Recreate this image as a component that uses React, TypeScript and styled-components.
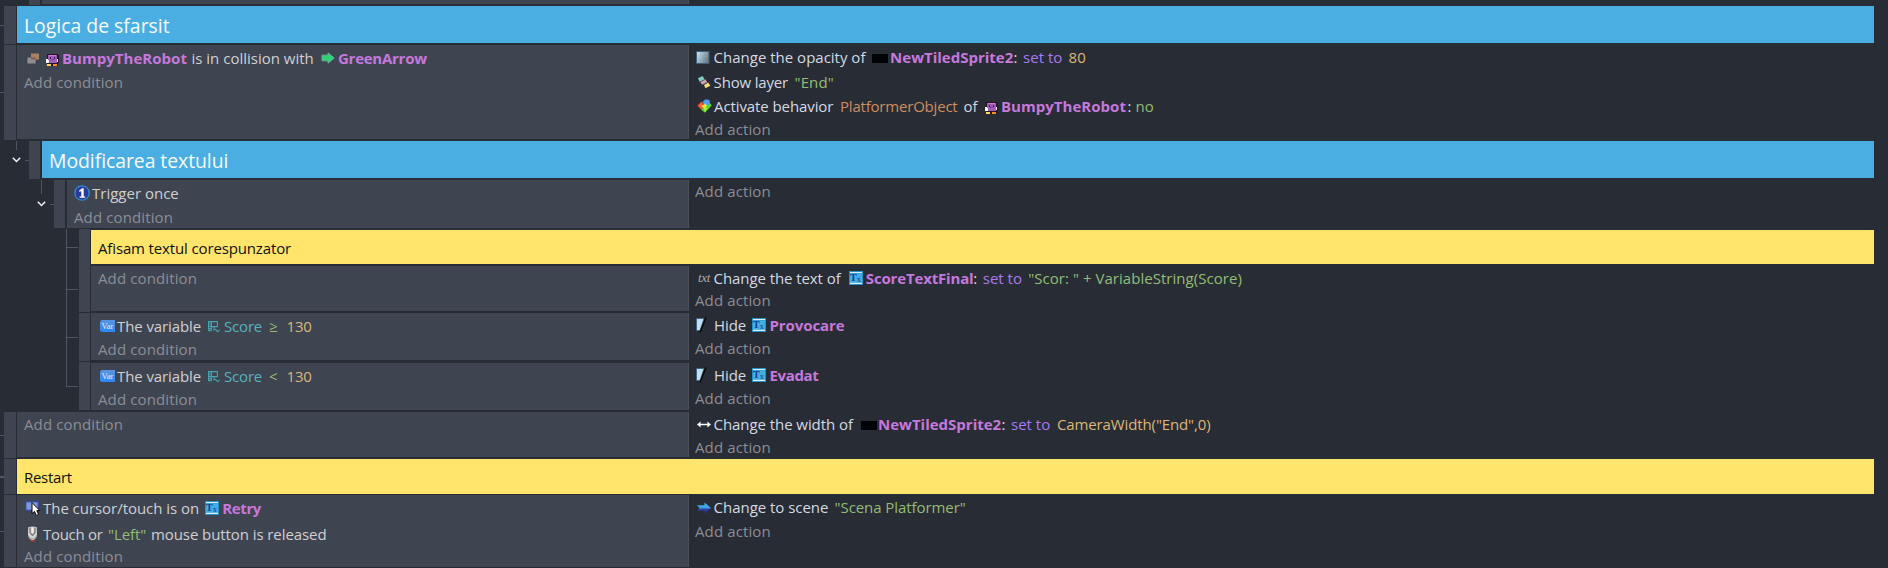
import React, { ReactNode } from "react";
import styled, { createGlobalStyle } from "styled-components";

const Global = createGlobalStyle`
  body { margin: 0; background: #282c34; overflow: hidden; }
`;

const line = "#50555f";

const Sheet = styled.main`
  width: 1888px;
  height: 568px;
  overflow: hidden;
  background: #282c34;
  font-family: "Open Sans", "Noto Sans", sans-serif;
  font-size: 15px;
  color: #d4d9e4;
`;

const Row = styled.div<{ $h: number }>`
  display: flex;
  align-items: flex-start;
  height: ${(p) => p.$h}px;
  padding-right: 14px;
`;

/* Indentation area holding the tree connectors */
const Gutter = styled.div<{ $w: number; $trunk?: number }>`
  flex: none;
  display: flex;
  flex-direction: column;
  box-sizing: border-box;
  width: ${(p) => p.$w}px;
  height: 100%;
  padding-left: ${(p) => p.$trunk ?? 0}px;
`;

const Elbow = styled.div<{ $y: number; $side?: boolean; $w: number; $thick?: number }>`
  box-sizing: border-box;
  width: ${(p) => p.$w}px;
  height: ${(p) => p.$y}px;
  border-left: ${(p) => (p.$side ? `1px solid ${line}` : "none")};
  border-bottom: ${(p) => p.$thick ?? 1}px solid ${line};
`;

const Trunk = styled.div<{ $h?: number }>`
  width: 1px;
  ${(p) => (p.$h ? `height: ${p.$h}px;` : "flex: 1;")}
  background: ${line};
`;

const Toggle = styled.div<{ $mt: number }>`
  display: flex;
  align-items: center;
  height: 8px;
  margin: ${(p) => p.$mt}px 0 0 -4px;
`;

const Stub = styled.span`
  width: 4px;
  height: 1px;
  margin-left: 4px;
  background: ${line};
`;

const Strip = styled.div<{ $w: number; $h: number }>`
  flex: none;
  width: ${(p) => p.$w}px;
  height: ${(p) => p.$h}px;
  background: #3f4451;
`;

const Comment = styled.div<{ $tone: "blue" | "yellow"; $h: number; $gap: number; $mt?: number; $ls?: number }>`
  flex: 1;
  box-sizing: border-box;
  height: ${(p) => p.$h}px;
  margin: ${(p) => p.$mt ?? 0}px 0 0 ${(p) => p.$gap}px;
  padding-left: 7px;
  white-space: pre;
  background: ${(p) => (p.$tone === "blue" ? "#4aaee3" : "#ffe56c")};
  color: ${(p) => (p.$tone === "blue" ? "#f7fbfe" : "#111")};
  font-size: ${(p) => (p.$tone === "blue" ? 19.4 : 15)}px;
  letter-spacing: ${(p) => p.$ls ?? 0}px;
  line-height: ${(p) => p.$h + (p.$tone === "blue" ? 3 : 2)}px;
`;

const Conditions = styled.div<{ $left: number; $gap: number; $h: number; $mt?: number; $pt?: number }>`
  flex: none;
  box-sizing: border-box;
  width: ${(p) => 689 - p.$left}px;
  height: ${(p) => p.$h}px;
  margin: ${(p) => p.$mt ?? 0}px 0 0 ${(p) => p.$gap}px;
  padding: ${(p) => p.$pt ?? 0}px 0 0 7px;
  border-right: 1px solid #4b4f58;
  background: #3f4451;
  color: #cfd0d1;
`;

const Actions = styled.div<{ $mt?: number; $pt?: number }>`
  flex: 1;
  margin-top: ${(p) => p.$mt ?? 0}px;
  padding: ${(p) => p.$pt ?? 0}px 0 0 6px;
`;

const Line = styled.div<{ $h?: number }>`
  display: flex;
  height: ${(p) => p.$h ?? 24.5}px;
  line-height: ${(p) => p.$h ?? 24.5}px;
`;

const Add = styled.div<{ $h: number }>`
  height: ${(p) => p.$h}px;
  line-height: ${(p) => p.$h}px;
  letter-spacing: 0.12px;
  color: #8b8e95;
`;

const tones = {
  plain: "inherit",
  object: "#c678dd",
  operator: "#a97bf2",
  number: "#dcb777",
  string: "#93bd76",
  behavior: "#d08c60",
  variable: "#54b3bf",
};

/* $w is the slot width up to the next part of the sentence */
const Text = styled.span<{ $w?: number; $ls?: number; $tone?: keyof typeof tones }>`
  flex: none;
  width: ${(p) => (p.$w ? `${p.$w}px` : "auto")};
  white-space: pre;
  letter-spacing: ${(p) => p.$ls ?? 0}px;
  color: ${(p) => tones[p.$tone ?? "plain"]};
  font-weight: ${(p) => (p.$tone === "object" ? 700 : 400)};
`;

const IconSlot = styled.span<{ $w: number; $pl?: number; $dy?: number }>`
  flex: none;
  display: flex;
  align-items: center;
  box-sizing: border-box;
  width: ${(p) => p.$w}px;
  padding-left: ${(p) => p.$pl ?? 0}px;
  padding-top: ${(p) => p.$dy ?? 0}px;
  svg { flex: none; display: block; overflow: visible; }
`;

const Chevron = () => (
  <svg width="9" height="8" viewBox="0 0 9 8">
    <path d="M0.8 1.8 4.5 5.5 8.2 1.8" fill="none" stroke="#f2f2f2" strokeWidth="1.5" />
  </svg>
);

const Collision = () => (
  <svg width="12" height="11" viewBox="0 0 12 11">
    <rect x="4" y="0.5" width="8" height="6" fill="#a98163" />
    <rect x="0.4" y="4.5" width="8.2" height="6" fill="#8e8e8c" />
    <rect x="4" y="4.5" width="4.6" height="2" fill="#8a5450" />
  </svg>
);

const Robot = () => (
  <svg width="13" height="12" viewBox="0 0 13 12" shapeRendering="crispEdges">
    <path d="M1 0h11v1h1v8h-1v3H1V9H0V5h1z" fill="#231525" />
    <rect x="2" y="1" width="9" height="8" fill="#a25bbd" />
    <rect x="3" y="1" width="7" height="1" fill="#cf7bd4" />
    <rect x="4" y="3" width="1" height="2" fill="#3c1a4a" />
    <rect x="8" y="3" width="1" height="2" fill="#3c1a4a" />
    <rect x="5" y="5" width="3" height="1" fill="#7b3f97" />
    <path d="M0 5h2v1h1v3H0z" fill="#fff" />
    <rect x="11" y="5" width="1" height="3" fill="#efe7f2" />
    <rect x="1" y="10" width="4" height="2" fill="#ffd25a" />
    <rect x="7" y="10" width="4" height="2" fill="#f39220" />
  </svg>
);

const GreenArrowIcon = () => (
  <svg width="14" height="12" viewBox="0 0 14 12">
    <path d="M1 3.2h6V.8L13.2 6 7 11.2V8.8H1z" fill="#2fd276" stroke="#74a98d" strokeWidth="1" />
  </svg>
);

const Opacity = () => (
  <svg width="14" height="13" viewBox="0 0 14 13">
    <defs>
      <linearGradient id="op" x1="0" y1="0" x2="1" y2="0.5">
        <stop offset="0" stopColor="#c9e6f5" />
        <stop offset="1" stopColor="#6f7f8c" />
      </linearGradient>
    </defs>
    <rect x="0.5" y="0.5" width="12.5" height="12" fill="url(#op)" stroke="#3f5d75" />
  </svg>
);

const Layer = () => (
  <svg width="14" height="14" viewBox="0 0 15 14">
    <path d="M1 3 6 0.5 8.2 4.5 3 7z" fill="#7fcfc5" />
    <path d="M3.5 7 9 4 11 7.5 5.5 10z" fill="#d9a3b5" />
    <path d="M7.5 10.2 12 7.5 14.3 11 9 13.8z" fill="#f2dc7c" />
    <path d="M3 7 8.2 4.5M5.5 10 11.5 7.3" stroke="#5c4a55" strokeWidth=".8" />
  </svg>
);

const Behavior = () => (
  <svg width="15" height="14" viewBox="0 0 15 14">
    <path d="M0.5 6.5 4.5 2.5 8.5 7 4 10.5z" fill="#f4532b" />
    <path d="M5.5 3 8.5 0.3 12.5 1 13 5 8.5 7.5z" fill="#4f9df2" />
    <path d="M8.5 7 13.5 4.5 14.6 6.5 8 13.7 4 10.5z" fill="#55d836" />
    <path d="M2.8 5.2 5 7l3-2.5 2 2.3-2.5 2.4L5 8z" fill="#ffe14a" />
    <path d="M6.5 9 8.5 7.5 10 9.2 8 13z" fill="#b7ef35" />
  </svg>
);

const Tiled = () => (
  <svg width="16" height="9" viewBox="0 0 16 9">
    <rect width="16" height="9" fill="#000406" />
  </svg>
);

const Once = () => (
  <svg width="16" height="16" viewBox="0 0 16 16">
    <circle cx="8" cy="8" r="7.2" fill="#2b399d" stroke="#2e8fc9" strokeWidth="1.3" />
    <path d="M5.2 5.6 8.1 3.2h1.6v8.2h1.5v1.4H5.6v-1.4h1.7V6L5.6 7z" fill="#fff" />
  </svg>
);

const VarIcon = () => (
  <svg width="15" height="12" viewBox="0 0 15 12">
    <defs>
      <linearGradient id="vr" x1="0" y1="0" x2="0" y2="1">
        <stop offset="0" stopColor="#5a94df" />
        <stop offset="1" stopColor="#2c87f5" />
      </linearGradient>
    </defs>
    <path d="M1.5 0H15v12H1.5L0 10.5v-9z" fill="url(#vr)" />
    <text x="1.4" y="8.8" fontFamily="Liberation Serif, serif" fontSize="8.6" fill="#e6f0fc">Var</text>
  </svg>
);

const SceneVar = () => (
  <svg width="12" height="11" viewBox="0 0 12 11" fill="none" stroke="#4aa3b0">
    <path d="M.6 0v10M3.4 .5v9M.5 .6H9.6M9.4 .5v5.4M3.5 5.6H9.5M.5 3h3M.5 5.4h3M.5 7.6h3M.5 9.6h3" strokeWidth="1.1" />
    <path d="M5.4 9.4c1-1.6 2-1.6 3 0s2.2 1.3 3.2-.6M6.2 5.8v2" strokeWidth="1.1" />
  </svg>
);

const TextObj = () => (
  <svg width="14" height="14" viewBox="0 0 14 14">
    <rect width="14" height="14" fill="#2790c4" />
    <rect x="1" y="2.4" width="12" height="9.2" fill="#40b0e4" />
    <path d="M1 1.5h12M1 12.4h12" stroke="#d9f0fb" strokeWidth="1.1" />
    <text x="1.1" y="10.4" fontFamily="Liberation Serif, serif" fontWeight="700" fontSize="10" fill="#1c3c93">T</text>
    <text x="8" y="11" fontFamily="Liberation Serif, serif" fontWeight="700" fontSize="7.5" fill="#31509f">x</text>
  </svg>
);

const Txt = styled.span`
  margin-top: -1px;
  font-family: "Liberation Serif", serif;
  font-style: italic;
  font-size: 13px;
  letter-spacing: -0.3px;
  line-height: 20px;
  color: #a9a9a9;
`;

const HideIcon = () => (
  <svg width="11" height="16" viewBox="0 0 11 16">
    <path d="M0.5 1.5H8L4 13.5H0.5z" fill="#bfe0f0" stroke="#31597b" strokeWidth=".7" />
    <path d="M10 .5 4 15.5" stroke="#07090b" strokeWidth="1.5" />
  </svg>
);

const WidthIcon = () => (
  <svg width="14" height="7" viewBox="0 0 14 7">
    <path d="M0 3.5 3.6 .6v2.2h6.8V.6L14 3.5l-3.6 2.9V4.2H3.6v2.2z" fill="#fff" />
  </svg>
);

const CursorIcon = () => (
  <svg width="16" height="16" viewBox="0 0 16 16">
    <rect x="0.7" y="1.7" width="12.6" height="8.6" fill="#7f97dc" stroke="#2f49a0" strokeWidth="1.3" />
    <path d="M7 2.6v11l2.5-2.2 1.8 4 2.3-1-1.8-3.8h3.1z" fill="#fff" stroke="#050505" strokeWidth="1" />
  </svg>
);

const MouseIcon = () => (
  <svg width="11" height="16" viewBox="0 0 11 16">
    <path d="M1.2 1.2C3.5 .2 7.5 .2 9.8 1.2L10 7c0 4-1.5 7-4.5 7S1 11 1 7z" fill="#d6d6d4" />
    <path d="M3 1.5v5l2.5 3 2.5-3v-5" fill="none" stroke="#65625f" strokeWidth="1.1" />
    <path d="M5.5 2v4.6" stroke="#f3f3f3" strokeWidth="1.4" />
    <path d="M1.6 9.5C2.5 13.6 8.5 13.6 9.4 9.5" fill="none" stroke="#a3a19f" />
    <path d="M3.4 14.4c1.4.8 2.8.8 4.2 0" stroke="#c03a30" strokeWidth="1.5" fill="none" />
  </svg>
);

const SceneArrow = () => (
  <svg width="14" height="12" viewBox="0 0 14 12">
    <defs>
      <linearGradient id="sa" x1="0" y1="0" x2="0" y2="1">
        <stop offset="0.15" stopColor="#45b5ea" />
        <stop offset="0.5" stopColor="#3f9ce0" />
        <stop offset="0.6" stopColor="#2d3fa5" />
        <stop offset="1" stopColor="#26307e" />
      </linearGradient>
    </defs>
    <path d="M0 3.3h7.5V.4L14 6l-6.5 5.6V8.8H0L2.4 6z" fill="url(#sa)" />
  </svg>
);

type EventProps = {
  h: number;
  level: 0 | 3;
  stub: number;
  last?: boolean;
  cell: number;
  strip: number;
  mt?: number;
  pt?: number;
  apt?: number;
  conditions: ReactNode;
  actions: ReactNode;
};

const RootGutter = ({ y, thick }: { y: number; thick?: number }) => (
  <Gutter $w={4}><Elbow $y={y} $w={4} $thick={thick} /></Gutter>
);

const NestedGutter = ({ y, last }: { y: number; last?: boolean }) => (
  <Gutter $w={79} $trunk={66}>
    <Elbow $y={y} $w={12} $side />
    {!last && <Trunk />}
  </Gutter>
);

const EventRow = (p: EventProps) => (
  <Row $h={p.h}>
    {p.level === 0 ? <RootGutter y={p.stub} /> : <NestedGutter y={p.stub} last={p.last} />}
    <Strip $w={p.level === 0 ? 12 : 11} $h={p.strip} />
    <Conditions $left={p.level === 0 ? 17 : 91} $gap={1} $h={p.cell} $mt={p.mt} $pt={p.pt}>
      {p.conditions}
    </Conditions>
    <Actions $mt={p.mt} $pt={p.apt}>{p.actions}</Actions>
  </Row>
);

const ScoreCondition = ({ op }: { op: string }) => (
  <Line>
    <IconSlot $w={19} $pl={2}><VarIcon /></IconSlot>
    <Text $w={91} $ls={-0.1}>The variable</Text>
    <IconSlot $w={16} $dy={1}><SceneVar /></IconSlot>
    <Text $w={45} $ls={-0.18} $tone="variable">Score</Text>
    <Text $w={17.5} $tone="string">{op}</Text>
    <Text $ls={-0.2} $tone="number">130</Text>
  </Line>
);

const HideAction = ({ name, ls }: { name: string; ls: number }) => (
  <Line>
    <IconSlot $w={19} $pl={1}><HideIcon /></IconSlot>
    <Text $w={38} $ls={-0.1}>Hide</Text>
    <IconSlot $w={17.5}><TextObj /></IconSlot>
    <Text $ls={ls} $tone="object">{name}</Text>
  </Line>
);

export default function App() {
  return (
    <Sheet>
      <Global />
      <Row $h={6}>
        <Gutter $w={29} />
        <Strip $w={11} $h={5} />
        <Conditions $left={42} $gap={2} $h={4} />
      </Row>

      <Row $h={39}>
        <RootGutter y={20} />
        <Strip $w={12} $h={38} />
        <Comment $tone="blue" $h={37} $gap={1}>Logica de sfarsit</Comment>
      </Row>

      <EventRow
        h={96} level={0} stub={48} cell={94} strip={95} pt={1}
        conditions={<>
          <Line>
            <IconSlot $w={21.5} $pl={3}><Collision /></IconSlot>
            <IconSlot $w={16.5} $dy={3}><Robot /></IconSlot>
            <Text $w={129.5} $ls={0.03} $tone="object">BumpyTheRobot</Text>
            <Text $w={129}>is in collision with</Text>
            <IconSlot $w={17.5}><GreenArrowIcon /></IconSlot>
            <Text $ls={-0.26} $tone="object">GreenArrow</Text>
          </Line>
          <Add $h={23.5}>Add condition</Add>
        </>}
        actions={<>
          <Line>
            <IconSlot $w={18.6} $pl={1}><Opacity /></IconSlot>
            <Text $w={158.5}>Change the opacity of</Text>
            <IconSlot $w={18} $dy={2}><Tiled /></IconSlot>
            <Text $w={123.5} $tone="object">NewTiledSprite2</Text>
            <Text $w={9.5}>:</Text>
            <Text $w={45.5} $tone="operator">set to</Text>
            <Text $tone="number">80</Text>
          </Line>
          <Line>
            <IconSlot $w={18.6} $pl={2}><Layer /></IconSlot>
            <Text $w={81} $ls={-0.18}>Show layer</Text>
            <Text $ls={0.1} $tone="string">"End"</Text>
          </Line>
          <Line>
            <IconSlot $w={19} $pl={2}><Behavior /></IconSlot>
            <Text $w={126} $ls={-0.09}>Activate behavior</Text>
            <Text $w={123.5} $ls={-0.2} $tone="behavior">PlatformerObject</Text>
            <Text $w={21}>of</Text>
            <IconSlot $w={16.5} $dy={3}><Robot /></IconSlot>
            <Text $w={126.5} $ls={0.03} $tone="object">BumpyTheRobot</Text>
            <Text $w={8}>:</Text>
            <Text $tone="string">no</Text>
          </Line>
          <Add $h={20.5}>Add action</Add>
        </>}
      />

      <Row $h={39}>
        <Gutter $w={29} $trunk={16}>
          <Trunk $h={9} />
          <Toggle $mt={6}><Chevron /><Stub /></Toggle>
        </Gutter>
        <Strip $w={11} $h={38} />
        <Comment $tone="blue" $h={37} $gap={2} $ls={-0.05}>Modificarea textului</Comment>
      </Row>

      <Row $h={49}>
        <Gutter $w={54} $trunk={41}>
          <Trunk $h={14} />
          <Toggle $mt={6}><Chevron /><Stub /></Toggle>
        </Gutter>
        <Strip $w={11} $h={48} />
        <Conditions $left={67} $gap={2} $h={48} $pt={1}>
          <Line>
            <IconSlot $w={18}><Once /></IconSlot>
            <Text>Trigger once</Text>
          </Line>
          <Add $h={23}>Add condition</Add>
        </Conditions>
        <Actions><Add $h={22}>Add action</Add></Actions>
      </Row>

      <Row $h={36}>
        <NestedGutter y={19} />
        <Strip $w={11} $h={36} />
        <Comment $tone="yellow" $h={34} $gap={1} $mt={1} $ls={-0.14}>Afisam textul corespunzator</Comment>
      </Row>

      <EventRow
        h={48} level={3} stub={25} cell={45} strip={47} mt={1}
        conditions={<Add $h={24}>Add condition</Add>}
        actions={<>
          <Line $h={24}>
            <IconSlot $w={18.6} $pl={3}><Txt>txt</Txt></IconSlot>
            <Text $w={135} $ls={-0.08}>Change the text of</Text>
            <IconSlot $w={17.2}><TextObj /></IconSlot>
            <Text $w={107.5} $ls={-0.16} $tone="object">ScoreTextFinal</Text>
            <Text $w={9.5}>:</Text>
            <Text $w={45.5} $tone="operator">set to</Text>
            <Text $ls={0.04} $tone="string">"Scor: " + VariableString(Score)</Text>
          </Line>
          <Add $h={21.5}>Add action</Add>
        </>}
      />

      <EventRow
        h={49} level={3} stub={25} cell={47} strip={48} pt={1}
        conditions={<><ScoreCondition op="≥" /><Add $h={21.5}>Add condition</Add></>}
        actions={<><HideAction name="Provocare" ls={-0.09} /><Add $h={21}>Add action</Add></>}
      />

      <EventRow
        h={50} level={3} stub={25} last cell={47} strip={48} mt={1} pt={1}
        conditions={<><ScoreCondition op="<" /><Add $h={21.5}>Add condition</Add></>}
        actions={<><HideAction name="Evadat" ls={-0.37} /><Add $h={21.5}>Add action</Add></>}
      />

      <EventRow
        h={47} level={0} stub={24} cell={45} strip={46}
        conditions={<Add $h={24.5}>Add condition</Add>}
        actions={<>
          <Line>
            <IconSlot $w={18.6} $pl={2}><WidthIcon /></IconSlot>
            <Text $w={147.4} $ls={-0.07}>Change the width of</Text>
            <IconSlot $w={17} $dy={2}><Tiled /></IconSlot>
            <Text $w={123.5} $tone="object">NewTiledSprite2</Text>
            <Text $w={9.5}>:</Text>
            <Text $w={46} $tone="operator">set to</Text>
            <Text $ls={-0.12} $tone="number">CameraWidth("End",0)</Text>
          </Line>
          <Add $h={21.5}>Add action</Add>
        </>}
      />

      <Row $h={36}>
        <RootGutter y={19} thick={2} />
        <Strip $w={12} $h={35} />
        <Comment $tone="yellow" $h={35} $gap={1} $ls={-0.3}>Restart</Comment>
      </Row>

      <EventRow
        h={73} level={0} stub={37} cell={72} strip={72} pt={1} apt={0.3}
        conditions={<>
          <Line>
            <IconSlot $w={19} $pl={1}><CursorIcon /></IconSlot>
            <Text $w={162} $ls={-0.04}>The cursor/touch is on</Text>
            <IconSlot $w={17.2}><TextObj /></IconSlot>
            <Text $ls={-0.36} $tone="object">Retry</Text>
          </Line>
          <Line $h={26}>
            <IconSlot $w={19} $pl={3}><MouseIcon /></IconSlot>
            <Text $w={65} $ls={-0.3}>Touch or</Text>
            <Text $w={43} $ls={-0.05} $tone="string">"Left"</Text>
            <Text $ls={-0.08}>mouse button is released</Text>
          </Line>
          <Add $h={19.5}>Add condition</Add>
        </>}
        actions={<>
          <Line>
            <IconSlot $w={18.6} $pl={2}><SceneArrow /></IconSlot>
            <Text $w={121} $ls={-0.03}>Change to scene</Text>
            <Text $ls={-0.07} $tone="string">"Scena Platformer"</Text>
          </Line>
          <Add $h={23}>Add action</Add>
        </>}
      />
    </Sheet>
  );
}
